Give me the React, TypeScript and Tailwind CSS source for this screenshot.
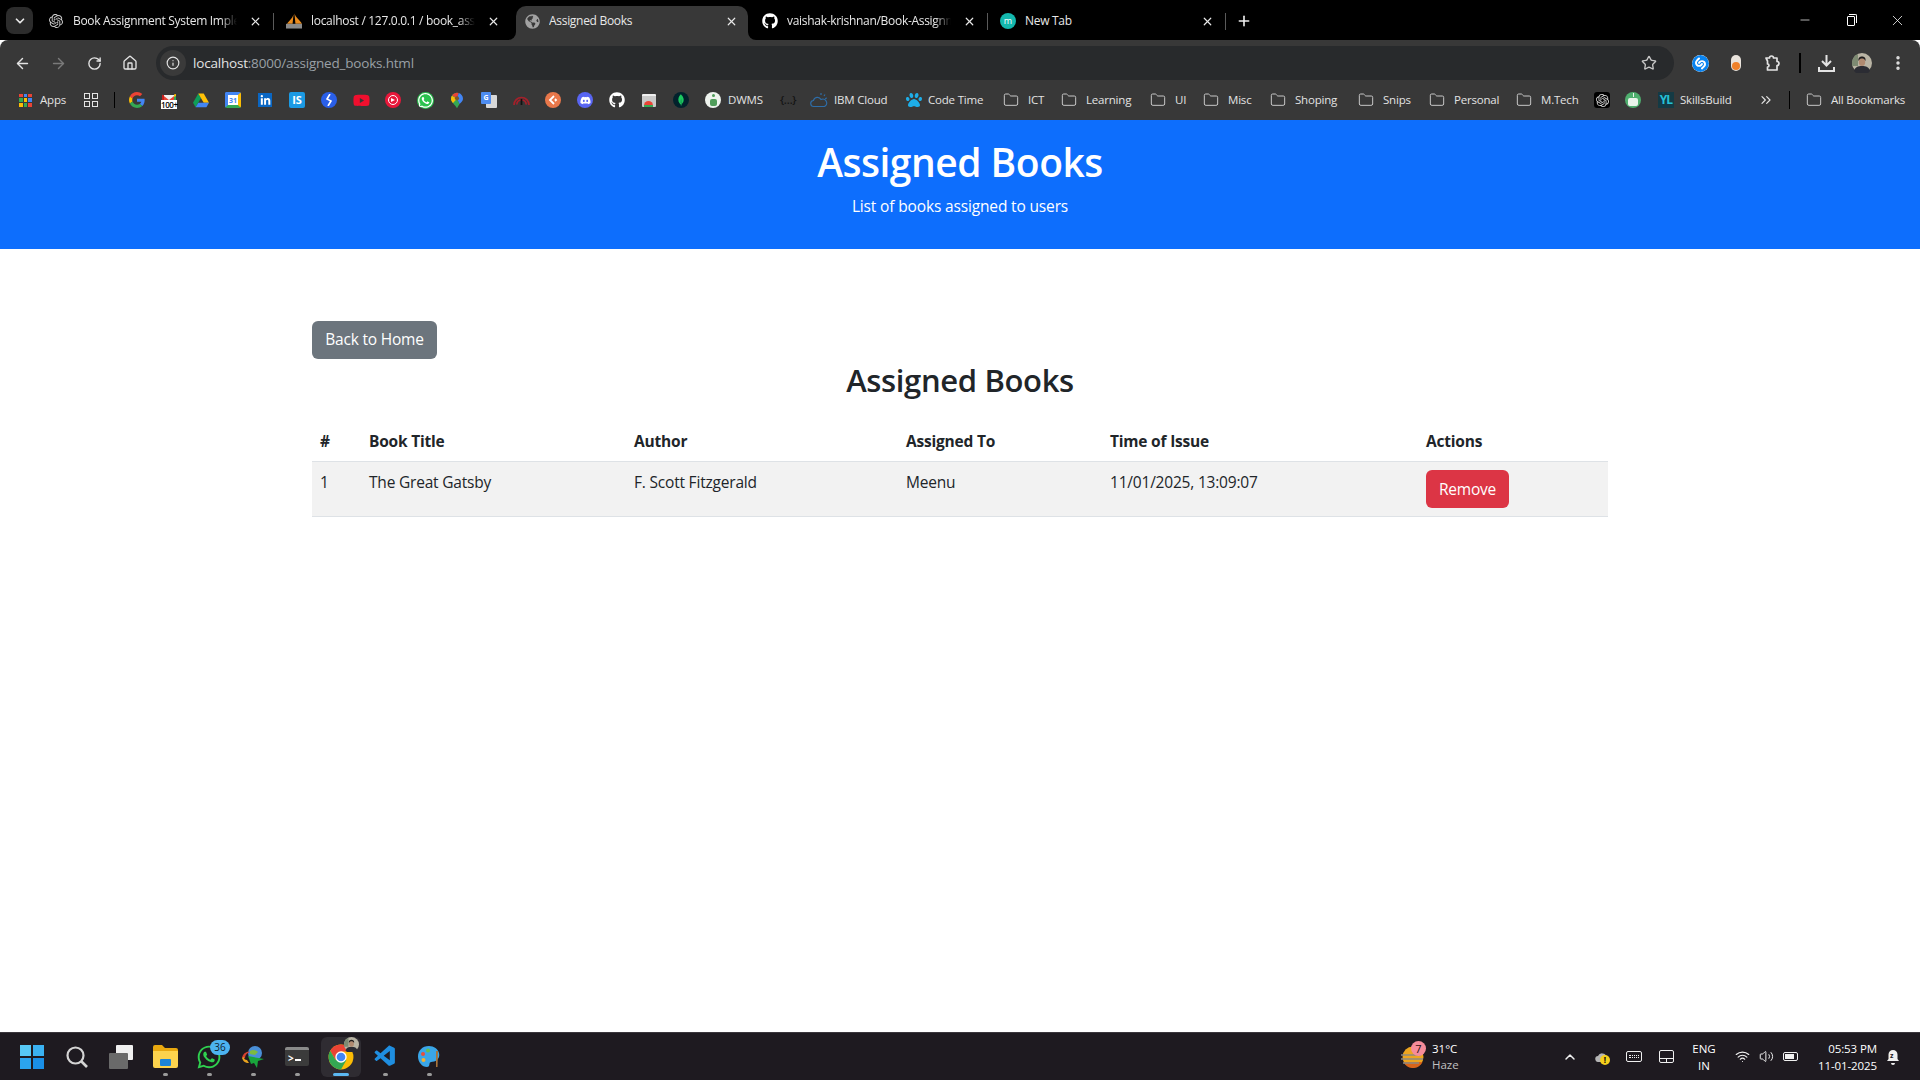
import React from 'react';
import {
  ArrowLeft,
  ArrowRight,
  ChevronDown,
  ChevronUp,
  ChevronsRight,
  EllipsisVertical,
  Folder,
  House,
  Info,
  Minus,
  Plus,
  RotateCw,
  Star,
  Volume2,
  Wifi,
  X,
} from 'lucide-react';
import { FaDiscord, FaGithub, FaGlobeAmericas, FaLinkedinIn, FaPaw, FaWhatsapp, FaYoutube } from 'react-icons/fa';
import { SiMongodb, SiOpenai, SiShazam } from 'react-icons/si';
import { VscVscode } from 'react-icons/vsc';

const GoogleG = ({ size = 16 }: { size?: number }) => (
  <svg width={size} height={size} viewBox="0 0 48 48">
    <path fill="#EA4335" d="M24 9.500c3.500 0 6.700 1.300 9.100 3.500l6.800-6.800C35.800 2.400 30.200 0 24 0 14.600 0 6.500 5.400 2.600 13.200l7.900 6.100C12.400 13.600 17.700 9.500 24 9.500z" />
    <path fill="#4285F4" d="M46.900 24.500c0-1.600-.1-3.100-.4-4.500H24v9h12.900c-.6 3-2.200 5.400-4.700 7.100l7.600 5.900c4.500-4.100 7.100-10.200 7.100-17.500z" />
    <path fill="#FBBC05" d="M10.500 28.700c-.5-1.500-.8-3-.8-4.700s.3-3.200.8-4.700l-7.900-6.100C.9 16.500 0 20.100 0 24s.9 7.500 2.600 10.800l7.900-6.100z" />
    <path fill="#34A853" d="M24 48c6.500 0 11.900-2.100 15.900-5.900l-7.600-5.900c-2.100 1.400-4.900 2.300-8.200 2.300-6.300 0-11.600-4.200-13.500-9.900l-7.900 6.100C6.500 42.600 14.600 48 24 48z" />
  </svg>
);

const Gmail = () => (
  <div className="relative w-4 h-4">
    <svg width="16" height="16" viewBox="0 0 16 16" className="absolute inset-0">
      <path fill="#f1f1f1" d="M1 3h14v10H1z" />
      <path fill="#EA4335" d="M1 2.500 8 8l7-5.500V7L8 11 1 7z" />
      <path fill="#C5221F" d="M1 3h2v5H1z" />
      <path fill="#34A853" d="M13 3h2v5h-2z" />
      <path fill="#FBBC05" d="M13 2.500 15 2v2l-2 1z" />
    </svg>
    <span className="absolute left-0 right-0 -bottom-[1px] bg-white text-black text-[8px] leading-[9px] text-center font-semibold tracking-tighter">
      100+
    </span>
  </div>
);

const Drive = () => (
  <svg width="16" height="15" viewBox="0 0 16 14">
    <path fill="#0F9D58" d="M5.300 0h0L0 9.200l2.600 4.500L8 4.500z" />
    <path fill="#FFC107" d="M5.300 0h5.400L16 9.200h-5.300z" />
    <path fill="#4285F4" d="M2.600 13.700h10.800L16 9.200H5.300z" />
  </svg>
);

const GCal = () => (
  <div className="w-4 h-4 bg-white rounded-[2px] border-t-[3px] border-t-[#4285f4] border-l-[3px] border-l-[#4285f4] border-r-[3px] border-r-[#fbbc05] border-b-[3px] border-b-[#34a853] flex items-center justify-center text-[7px] font-bold text-[#4285f4] leading-none">
    31
  </div>
);

const Maps = () => (
  <svg width="12" height="17" viewBox="0 0 14 18">
    <path fill="#34A853" d="M7 0a7 7 0 0 0-7 7c0 4.500 5 7 7 11 1-2 2-3.500 3-5L7 7z" />
    <path fill="#FBBC05" d="M1 3.500C.3 4.500 0 5.700 0 7c0 2 1 3.500 2.300 5L7 7z" />
    <path fill="#EA4335" d="M7 0C4.800 0 2.600 1 1.200 3L7 7l2-6.700C8.400.1 7.700 0 7 0z" />
    <path fill="#4285F4" d="M14 7c0-3-2-5.800-5-6.700L7 7l3 6c2-2 4-3.500 4-6z" />
    <circle cx="7" cy="6.500" r="2.400" fill="#7b5a2a" />
  </svg>
);

const Translate = () => (
  <div className="relative w-[16px] h-[16px]">
    <div className="absolute left-[5px] top-[3px] w-[11px] h-[13px] bg-[#d8d8d8] rounded-[1px]" />
    <div className="absolute left-0 top-0 w-[10px] h-[12px] bg-[#4d8cf0] rounded-[1px] text-white text-[7px] leading-[12px] text-center font-bold">
      G
    </div>
  </div>
);

const Speedo = () => (
  <svg width="17" height="12" viewBox="0 0 17 12" fill="none" stroke="#a5202a" strokeWidth="1.700">
    <path d="M1 11a7.500 7.500 0 0 1 15 0" />
    <path d="M3.800 10.500a4.700 4.700 0 0 1 9.400 0" />
    <path stroke="#111" d="M8.500 11V5" />
  </svg>
);

const ChromeBox = () => (
  <div className="relative w-[14px] h-[13px] bg-[#c9c9c9] rounded-[1px] border-t-2 border-t-[#efefef]">
    <div className="absolute left-[2px] bottom-0 w-[9px] h-[6px] rounded-t-full bg-[#ea4335] border-b-2 border-b-[#34a853]" />
  </div>
);

const Chrome = ({ size = 36 }: { size?: number }) => (
  <svg width={size} height={size} viewBox="0 0 48 48">
    <circle cx="24" cy="24" r="23" fill="#FBBC05" />
    <path fill="#EA4335" d="M24 1a23 23 0 0 0-19.900 11.500L14 29.500 24 14h19.900A23 23 0 0 0 24 1z" />
    <path fill="#34A853" d="M4.100 12.500A23 23 0 0 0 24 47l10-17.500-20 0z" />
    <circle cx="24" cy="24" r="10.500" fill="#fff" />
    <circle cx="24" cy="24" r="8" fill="#4285F4" />
  </svg>
);

const Windows = () => (
  <div className="grid grid-cols-2 gap-[2px] w-6 h-6">
    <div className="bg-[#57c8f5]" />
    <div className="bg-[#3ab2f2]" />
    <div className="bg-[#2ba4ee]" />
    <div className="bg-[#1a8fe6]" />
  </div>
);

const Explorer = () => (
  <svg width="25" height="23" viewBox="0 0 25 23">
    <path fill="#e8a80f" d="M0 2a2 2 0 0 1 2-2h7l3 3h11a2 2 0 0 1 2 2v4H0z" />
    <path fill="#fcd34d" d="M0 6h25v15a2 2 0 0 1-2 2H2a2 2 0 0 1-2-2z" />
    <rect x="7" y="14" width="11" height="7" rx="1" fill="#1c84d6" />
  </svg>
);

const Idm = () => (
  <svg width="24" height="24" viewBox="0 0 24 24">
    <circle cx="14" cy="8" r="7" fill="#4a8fd8" />
    <path fill="#7dbb3f" d="M9 6c3-2 6-1 8 1l-3 3-5-1z" />
    <path fill="#d6402e" d="M1 13c1-5 5-7 8-6-3 1-5 3-5 6z" />
    <path fill="#e9a21e" d="M1 13c1 3 3 5 7 5l-2-3c-2 0-3-1-3-3z" />
    <path fill="#19a53c" d="M7 11l16 3-6 2-1 7-3-5-3 1z" />
  </svg>
);

const Palette = () => (
  <svg width="24" height="24" viewBox="0 0 24 24">
    <path fill="#3aa6e8" d="M12 1C5 1 1 6 1 11.500S5 22 10 22c3 0 2-3 3-4.500 1-1 4-.5 5.500-1.500C21 14.500 23 12 22 8c-1-4-5-7-10-7z" />
    <circle cx="6" cy="9" r="2" fill="#e6503c" />
    <circle cx="11" cy="5.500" r="2" fill="#67c04c" />
    <circle cx="6.500" cy="15" r="2" fill="#f2b233" />
    <path fill="#a9743b" d="M19 6h2l-.5 16h-1.500z" />
  </svg>
);

const Avatar = ({ size }: { size: number }) => (
  <svg width={size} height={size} viewBox="0 0 20 20">
    <circle cx="10" cy="10" r="10" fill="#b9b4a4" />
    <path fill="#7d8a72" d="M0 9a10 10 0 0 1 6-8v12H0z" />
    <path fill="#2b2c33" d="M2 18c1-4 4-5 8-5s7 1 8 5a10 10 0 0 1-16 0z" />
    <ellipse cx="10" cy="9" rx="3.200" ry="4" fill="#b08a70" />
    <path fill="#1e1c1c" d="M6.500 8C6 4.500 8 3.500 10 3.500s4 1 3.500 4.500c-1-2-2-2.500-3.500-2.500S7.500 6 6.500 8z" />
  </svg>
);

const AppsGrid = () => {
  const colors = ['#ea4335', '#4285f4', '#ea4335', '#34a853', '#fbbc05', '#4285f4', '#fbbc05', '#34a853', '#ea4335'];
  return (
    <div className="grid grid-cols-3 gap-px w-[13px] h-[13px]">
      {colors.map((c, i) => (
        <span key={i} className="block" style={{ backgroundColor: c }} />
      ))}
    </div>
  );
};

const Slot = ({ children, dot }: { children: React.ReactNode; dot?: boolean }) => (
  <div className="relative w-11 h-10 flex items-center justify-center shrink-0">
    {children}
    {dot && <span className="absolute bottom-[1px] w-[5px] h-[3px] rounded-full bg-[#9a9a9a]" />}
  </div>
);

const Mark = ({ children }: { children: React.ReactNode }) => (
  <div className="w-8 h-5 flex items-center justify-center shrink-0">{children}</div>
);

const tabs = [
  { title: 'Book Assignment System Implementation', icon: <SiOpenai size={14} color="#d0d0d0" />, sep: true },
  {
    title: 'localhost / 127.0.0.1 / book_assignment',
    icon: (
      <svg width="17" height="16" viewBox="0 0 17 16">
        <path fill="#e98b1e" d="M9 0c1 4 6 7 8 11H10zM8 1 7 11H1c2-3 6-6 7-10z" />
        <path fill="#8a8a8a" d="M0 11h17v5H0z" />
      </svg>
    ),
  },
  { title: 'Assigned Books', icon: <FaGlobeAmericas size={15} color="#a2a2a2" />, active: true },
  { title: 'vaishak-krishnan/Book-Assignment', icon: <FaGithub size={16} color="#fff" />, sep: true },
  {
    title: 'New Tab',
    icon: (
      <span className="w-4 h-4 rounded-full bg-[#14b8ae] text-white text-[9px] leading-[15px] text-center">m</span>
    ),
    sep: true,
  },
];

const Tab = ({ title, icon, active, sep }: { title: string; icon: React.ReactNode; active?: boolean; sep?: boolean }) => (
  <div className="relative flex items-center w-[238px] h-[34px] shrink-0">
    {active && (
      <>
        <div className="absolute left-0 top-0 bottom-0 w-[232px] bg-[#383838] rounded-t-[10px]" />
        <div className="absolute -left-[8px] bottom-0 w-2 h-2 bg-[#383838]">
          <div className="w-2 h-2 bg-black rounded-br-[8px]" />
        </div>
        <div className="absolute left-[232px] bottom-0 w-2 h-2 bg-[#383838]">
          <div className="w-2 h-2 bg-black rounded-bl-[8px]" />
        </div>
      </>
    )}
    <div className="relative z-10 flex items-center pl-2 pb-1 h-full">
      <div className="w-4 h-4 flex items-center justify-center shrink-0">{icon}</div>
      <div className={`ml-[9px] w-[164px] whitespace-nowrap overflow-hidden text-[12px] tracking-[-0.3px] text-[#e8e8e8] ${title.length > 26 ? '[mask-image:linear-gradient(to_right,black_90%,transparent)]' : ''}`}>
        {title}
      </div>
      <X size={13} strokeWidth={2.2} color="#e8e8e8" className="ml-[12px] shrink-0" />
      {sep && <span className="ml-[11px] w-px h-[17px] bg-[#5a5a5a]" />}
    </div>
  </div>
);

const TabStrip = () => (
  <div className="flex h-10 bg-black shrink-0">
    <div className="ml-[6px] mt-[7px] w-[27px] h-[27px] rounded-lg bg-[#2c2c2c] flex items-center justify-center">
      <ChevronDown size={14} strokeWidth={3} color="#e8e8e8" />
    </div>
    <div className="ml-[7px] mt-[6px] flex">
      {tabs.map((t) => (
        <Tab key={t.title} title={t.title} icon={t.icon} active={t.active} sep={t.sep} />
      ))}
    </div>
    <div className="mt-[6px] pb-1 h-[34px] flex items-center ml-[6px]">
      <Plus size={16} strokeWidth={2.4} color="#f0f0f0" />
    </div>
    <div className="ml-auto flex h-10 items-center">
      <div className="w-[46px] flex justify-center">
        <Minus size={14} strokeWidth={1.2} color="#fff" />
      </div>
      <div className="w-[46px] flex justify-center">
        <div className="relative w-[8px] h-[10px] mt-[2px] border border-white rounded-[1px]">
          <div className="absolute -top-[3px] left-[1px] w-[8px] h-[9px] border-t border-r border-white rounded-tr-[2px]" />
        </div>
      </div>
      <div className="w-[46px] flex justify-center">
        <X size={17} strokeWidth={1.1} color="#fff" />
      </div>
    </div>
  </div>
);

const ToolBtn = ({ children }: { children: React.ReactNode }) => (
  <div className="w-9 h-[34px] flex items-center justify-center shrink-0">{children}</div>
);

const Toolbar = () => (
  <div className="flex items-center h-10 pt-[6px] pl-1 bg-[#383838] rounded-t-lg shrink-0">
    <ToolBtn>
      <ArrowLeft size={17} strokeWidth={2} color="#e3e3e3" />
    </ToolBtn>
    <ToolBtn>
      <ArrowRight size={17} strokeWidth={2} color="#7a7a7a" />
    </ToolBtn>
    <ToolBtn>
      <RotateCw size={15} strokeWidth={2.2} color="#e3e3e3" />
    </ToolBtn>
    <ToolBtn>
      <House size={16} strokeWidth={2} color="#e3e3e3" />
    </ToolBtn>
    <div className="ml-2 flex-1 h-[34px] rounded-full bg-[#282a2c] flex items-center pl-1 pr-[17px]">
      <div className="w-[26px] h-[26px] rounded-full bg-[#3a3a3a] flex items-center justify-center">
        <Info size={14} strokeWidth={2} color="#e3e3e3" />
      </div>
      <div className="ml-[7px] text-[13.500px] tracking-[-0.2px] text-[#e3e3e3]">
        localhost<span className="text-[#9aa0a6]">:8000/assigned_books.html</span>
      </div>
      <Star size={16} strokeWidth={2} color="#c7c7c7" className="ml-auto" />
    </div>
    <div className="w-[246px] pl-2 flex items-center">
      <ToolBtn>
        <SiShazam size={17} color="#0a84f0" className="bg-white rounded-full" />
      </ToolBtn>
      <ToolBtn>
        <div className="relative w-[10px] h-4 rounded-full bg-[#e9e3dc]">
          <div className="absolute bottom-[1px] left-[1px] w-2 h-2 rounded-full bg-[#f0812a]" />
        </div>
      </ToolBtn>
      <ToolBtn>
        <svg width="17" height="17" viewBox="0 0 17 17" fill="none" stroke="#e3e3e3" strokeWidth="1.700" strokeLinejoin="round">
          <path d="M2 3h3.500a2 2 0 0 1 4 0H13v3.500a2 2 0 0 1 0 4V15H3.500v-3a1.500 1.500 0 0 0 0-3V6z" />
        </svg>
      </ToolBtn>
      <span className="ml-[9px] w-[2px] h-5 bg-black" />
      <div className="ml-[7px] flex">
        <ToolBtn>
          <svg width="17" height="17" viewBox="0 0 17 17" fill="none" stroke="#e3e3e3" strokeWidth="2">
            <path d="M8.500 0v10M4 6l4.500 4.500L13 6M1 12v4h15v-4" />
          </svg>
        </ToolBtn>
        <ToolBtn>
          <Avatar size={20} />
        </ToolBtn>
        <ToolBtn>
          <EllipsisVertical size={18} strokeWidth={2.6} color="#e3e3e3" />
        </ToolBtn>
      </div>
    </div>
  </div>
);

const BookmarkIcons = () => (
  <>
    <Mark>
      <GoogleG />
    </Mark>
    <Mark>
      <Gmail />
    </Mark>
    <Mark>
      <Drive />
    </Mark>
    <Mark>
      <GCal />
    </Mark>
    <Mark>
      <div className="w-[14px] h-[14px] bg-[#0a66c2] flex items-center justify-center">
        <FaLinkedinIn size={11} color="#fff" />
      </div>
    </Mark>
    <Mark>
      <div className="w-4 h-4 rounded-[2px] bg-[#1b9ae4] text-white text-[11px] leading-4 font-bold text-center">IS</div>
    </Mark>
    <Mark>
      <div className="w-4 h-4 rounded-full bg-[#2a5fe8] flex items-center justify-center">
        <svg width="8" height="12" viewBox="0 0 8 12" fill="none" stroke="#fff" strokeWidth="1.600">
          <path d="M5 0 2 5l4 2-3 5" />
        </svg>
      </div>
    </Mark>
    <Mark>
      <FaYoutube size={17} color="#f00f2e" />
    </Mark>
    <Mark>
      <div className="w-4 h-4 rounded-full bg-[#e8173a] flex items-center justify-center">
        <div className="w-[10px] h-[10px] rounded-full border border-white flex items-center justify-center">
          <div className="w-0 h-0 border-y-[2.500px] border-y-transparent border-l-[4px] border-l-white" />
        </div>
      </div>
    </Mark>
    <Mark>
      <FaWhatsapp size={17} color="#fff" className="bg-[#2bc24f] rounded-full" />
    </Mark>
    <Mark>
      <Maps />
    </Mark>
    <Mark>
      <Translate />
    </Mark>
    <Mark>
      <Speedo />
    </Mark>
    <Mark>
      <div className="w-4 h-4 rounded-full bg-[#e8774a] flex items-center justify-center">
        <svg width="10" height="10" viewBox="0 0 10 10" fill="none" stroke="#fff" strokeWidth="1.800">
          <path d="M6 1 2 5l4 4M7 4l1 1-1 1" />
        </svg>
      </div>
    </Mark>
    <Mark>
      <div className="w-4 h-4 rounded-full bg-[#5865f2] flex items-center justify-center">
        <FaDiscord size={11} color="#fff" />
      </div>
    </Mark>
    <Mark>
      <FaGithub size={16} color="#fff" />
    </Mark>
    <Mark>
      <ChromeBox />
    </Mark>
    <Mark>
      <div className="w-4 h-4 rounded-full bg-[#02222c] flex items-center justify-center">
        <SiMongodb size={12} color="#1cc860" />
      </div>
    </Mark>
    <Mark>
      <div className="relative w-4 h-4 rounded-full bg-[#eef3ee] flex items-center justify-center">
        <div className="w-[3px] h-[3px] absolute top-[2px] rounded-full bg-[#4f9d5a]" />
        <div className="w-[7px] h-[7px] mt-[5px] rounded-[2px] bg-[#4f9d5a]" />
      </div>
    </Mark>
  </>
);

const folders = [
  { label: 'ICT', outer: 'ml-[18px]', text: 'w-[15px]' },
  { label: 'Learning', outer: 'ml-[18px]', text: 'w-[45px]' },
  { label: 'UI', outer: 'ml-[19px]', text: 'w-[10px]' },
  { label: 'Misc', outer: 'ml-[18px]', text: 'w-[24px]' },
  { label: 'Shoping', outer: 'ml-[18px]', text: 'w-[44px]' },
  { label: 'Snips', outer: 'ml-[19px]', text: 'w-[28px]' },
  { label: 'Personal', outer: 'ml-[18px]', text: 'w-[44px]' },
  { label: 'M.Tech', outer: 'ml-[18px]', text: 'w-[36px]' },
];

const BmText = ({ className, children }: { className: string; children: React.ReactNode }) => (
  <span className={`${className} shrink-0 whitespace-nowrap text-[11.500px] tracking-[-0.2px] text-[#e3e3e3]`}>
    {children}
  </span>
);

const Bookmarks = () => (
  <div className="flex items-center h-10 pl-[19px] bg-[#383838] shrink-0">
    <AppsGrid />
    <BmText className="ml-2 w-[27px]">Apps</BmText>
    <div className="ml-2 w-8 flex justify-center">
      <div className="grid grid-cols-2 gap-[2px] w-[14px] h-[14px]">
        <span className="border-[1.500px] border-[#e3e3e3]" />
        <span className="border-[1.500px] border-[#e3e3e3]" />
        <span className="border-[1.500px] border-[#e3e3e3]" />
        <span className="border-[1.500px] border-[#e3e3e3]" />
      </div>
    </div>
    <span className="ml-[7px] w-px h-[16px] bg-black" />
    <div className="ml-[6px] flex">
      <BookmarkIcons />
    </div>
    <BmText className="-ml-px w-[34px]">DWMS</BmText>
    <div className="ml-[10px] w-8 flex justify-center text-[11px] text-[#141414] font-semibold tracking-tighter">{'{…}'}</div>
    <div className="w-[30px] flex justify-center">
      <svg width="18" height="16" viewBox="0 0 18 16" fill="none" stroke="#2e6da8" strokeWidth="1.200">
        <path d="M4 14.500a3 3 0 0 1-.5-6 4 4 0 0 1 7.500-1 3.500 3.500 0 0 1 3.500 7z" />
        <path d="M11 1v2M15 2.500l-1 1.500M17 6l-2 .5" />
      </svg>
    </div>
    <BmText className="w-[55px]">IBM Cloud</BmText>
    <FaPaw size={16} color="#1eaee8" className="ml-[17px] shrink-0" />
    <BmText className="ml-[6px] w-[57px]">Code Time</BmText>
    {folders.map((f) => (
      <div key={f.label} className={`${f.outer} flex items-center gap-[9px] shrink-0`}>
        <Folder size={16} strokeWidth={1.5} color="#c7c7c7" />
        <BmText className={f.text}>{f.label}</BmText>
      </div>
    ))}
    <div className="ml-[17px] w-4 h-4 rounded-[3px] bg-black flex items-center justify-center shrink-0">
      <SiOpenai size={13} color="#d8d8d8" />
    </div>
    <div className="relative ml-[15px] w-4 h-4 rounded-full bg-[#4fae6e] flex items-center justify-center shrink-0">
      <div className="absolute top-[1px] w-px h-[4px] bg-[#e9f3ea]" />
      <div className="w-[10px] h-2 mt-[3px] rounded-[2px] bg-[#e9f3ea]" />
    </div>
    <div className="ml-[17px] w-4 h-4 bg-[#143a44] flex items-center justify-center text-[12px] leading-none font-bold text-[#26c1d8] tracking-[-1px] shrink-0">
      YL
    </div>
    <BmText className="ml-[6px] w-[52px]">SkillsBuild</BmText>
    <ChevronsRight size={16} strokeWidth={1.8} color="#e3e3e3" className="ml-[26px] shrink-0" />
    <span className="ml-[15px] w-px h-[18px] bg-black" />
    <div className="ml-4 flex items-center gap-[9px] shrink-0">
      <Folder size={16} strokeWidth={1.5} color="#c7c7c7" />
      <BmText className="w-[74px]">All Bookmarks</BmText>
    </div>
  </div>
);

const Taskbar = () => (
  <div className="h-12 shrink-0 flex items-center pl-[10px] bg-[#1e1a20] border-t border-t-[#3a363c] text-white">
    <Slot>
      <Windows />
    </Slot>
    <div className="ml-px flex">
      <Slot>
        <svg width="24" height="24" viewBox="0 0 24 24" fill="none" stroke="#d4d4d4" strokeWidth="2.200">
          <circle cx="10.500" cy="10.500" r="8" />
          <path d="M16.500 16.500 22 22" strokeWidth="2.600" />
        </svg>
      </Slot>
      <Slot>
        <div className="relative w-6 h-6">
          <div className="absolute right-0 top-0 w-[17px] h-[15px] bg-[#f0f0f0] rounded-[1px]" />
          <div className="absolute left-0 bottom-0 w-[19px] h-[16px] bg-[#6a6a6a] rounded-[1px]" />
        </div>
      </Slot>
      <Slot dot>
        <Explorer />
      </Slot>
      <div className="relative">
        <Slot dot>
          <FaWhatsapp size={26} color="#2fd04f" />
        </Slot>
        <span className="absolute left-[23px] top-[3px] min-w-[20px] h-[15px] px-[3px] rounded-full bg-[#4cb3f0] text-[#10222e] text-[10px] leading-[15px] text-center">
          36
        </span>
      </div>
      <Slot dot>
        <Idm />
      </Slot>
      <Slot dot>
        <div className="w-6 h-[19px] rounded-[2px] bg-[#3b3b3b] border-t-[3px] border-t-[#8a8a8a] flex items-center pl-[3px] gap-[1px] text-[10px] font-bold leading-none text-white">
          <span>&gt;</span>
          <span className="mt-1 w-[6px] h-[2px] bg-white" />
        </div>
      </Slot>
      <div className="relative w-11 h-10 flex items-center justify-center shrink-0">
        <div className="absolute inset-x-[2px] inset-y-0 rounded-md bg-[#2f2c32]" />
        <div className="relative">
          <Chrome size={26} />
          <div className="absolute -top-[7px] -right-[5px]">
            <Avatar size={15} />
          </div>
        </div>
        <span className="absolute bottom-[1px] w-4 h-[3px] rounded-full bg-[#5cb8f2]" />
      </div>
      <Slot dot>
        <VscVscode size={25} color="#1f8ee0" />
      </Slot>
      <Slot dot>
        <Palette />
      </Slot>
    </div>
    <div className="ml-auto flex items-center pr-[19px]">
      <div className="relative w-[26px] h-8 flex items-center justify-center">
        <svg width="24" height="22" viewBox="0 0 24 22">
          <circle cx="12" cy="11" r="10.500" fill="#eda51f" />
          <path fill="#d9641a" d="M2.500 16h19a10.500 10.500 0 0 1-19 0z" />
          <path stroke="#8d8a80" strokeWidth="1.500" d="M0 9h20M0 13h22M2 17h16" />
        </svg>
        <span className="absolute left-[11px] top-0 w-[15px] h-[15px] rounded-full bg-[#f58c9a] text-[#2a0f12] text-[11px] leading-[15px] text-center">
          7
        </span>
      </div>
      <div className="ml-[6px] w-10 text-[11.500px] leading-[16px]">
        <div>31°C</div>
        <div className="text-[#c0c0c0]">Haze</div>
      </div>
      <div className="ml-[82px] w-8 flex justify-center">
        <ChevronUp size={16} strokeWidth={2.2} color="#f0f0f0" />
      </div>
      <div className="relative w-8 flex justify-center">
        <svg width="14" height="10" viewBox="0 0 14 10" fill="#b5b5b5">
          <path d="M3.500 10a3 3 0 0 1-.5-6 4.500 4.500 0 0 1 8.500 1A2.500 2.500 0 0 1 11 10z" />
        </svg>
        <span className="absolute left-[14px] top-[3px] w-[10px] h-[10px] rounded-full bg-[#f4cf1c] text-black text-[8px] leading-[10px] text-center font-bold">
          !
        </span>
      </div>
      <div className="w-8 flex justify-center">
        <div className="w-[16px] h-[11px] rounded-[2px] border border-[#f0f0f0] flex flex-col items-center justify-center gap-[1px]">
          <span className="w-[10px] border-t border-dotted border-[#f0f0f0]" />
          <span className="w-[10px] border-t border-dotted border-[#f0f0f0]" />
        </div>
      </div>
      <div className="w-8 flex justify-center">
        <div className="w-[15px] h-[13px] rounded-[2px] border border-[#f0f0f0] flex items-end">
          <div className="w-full h-[4px] border-t border-[#f0f0f0] flex justify-center">
            <span className="w-px h-full bg-[#f0f0f0]" />
          </div>
        </div>
      </div>
      <div className="ml-1 w-9 text-center text-[11.500px] leading-[17px]">
        <div>ENG</div>
        <div>IN</div>
      </div>
      <div className="ml-2 w-6 flex justify-center">
        <Wifi size={15} strokeWidth={1.8} color="#f0f0f0" />
      </div>
      <div className="w-6 flex justify-center">
        <Volume2 size={15} strokeWidth={1.6} color="#f0f0f0" />
      </div>
      <div className="w-6 flex justify-center">
        <div className="relative w-[15px] h-[9px] rounded-[2px] border border-[#f0f0f0]">
          <div className="absolute inset-[1px] right-[3px] bg-[#f0f0f0]" />
        </div>
      </div>
      <div className="ml-[5px] w-[70px] text-right text-[11.500px] leading-[17px] tracking-[-0.1px]">
        <div>05:53 PM</div>
        <div>11-01-2025</div>
      </div>
      <div className="relative ml-2 w-4 flex justify-center">
        <svg width="14" height="16" viewBox="0 0 14 16" fill="#f0f0f0">
          <path d="M7 1a4.500 4.500 0 0 0-4.500 4.500V10L1 12h12l-1.500-2V5.500A4.500 4.500 0 0 0 7 1zM5 14h4a2 2 0 0 1-4 0z" />
        </svg>
        <span className="absolute left-[5px] top-[3px] text-[7px] leading-[7px] font-bold text-[#1e1a20]">z</span>
      </div>
    </div>
  </div>
);

const columns = ['w-[49px]', 'w-[265px]', 'w-[272px]', 'w-[204px]', 'w-[316px]', 'w-[190px]'];
const heads = ['#', 'Book Title', 'Author', 'Assigned To', 'Time of Issue', 'Actions'];

const App = () => {
  return (
    <div className="h-[1080px] w-[1920px] flex flex-col overflow-hidden bg-white font-['Open_Sans',sans-serif]">
      <TabStrip />
      <Toolbar />
      <Bookmarks />
      <header className="bg-[#0d6efd] text-white text-center h-[129px] pt-[18px] shrink-0">
        <h1 className="text-[39px] leading-[48px] font-semibold mb-2 tracking-[-0.5px]">Assigned Books</h1>
        <p className="text-[15.500px] leading-6 tracking-[-0.15px]">List of books assigned to users</p>
      </header>
      <main className="flex-1 w-[1296px] mx-auto pt-[72px] text-[#212529]">
        <button className="block h-[38px] w-[125px] rounded-md bg-[#6c757d] text-white text-[15.500px] tracking-[-0.2px]">
          Back to Home
        </button>
        <h2 className="text-center text-[31px] leading-[38px] pt-[2px] font-semibold mb-[22px] tracking-[-0.35px]">
          Assigned Books
        </h2>
        <table className="w-full table-fixed border-collapse text-[15.500px] tracking-[-0.2px]">
          <colgroup>
            {columns.map((c) => (
              <col key={c} className={c} />
            ))}
          </colgroup>
          <thead>
            <tr className="border-b border-[#dee2e6]">
              {heads.map((h) => (
                <th key={h} className="p-2 text-left font-bold leading-6">
                  {h}
                </th>
              ))}
            </tr>
          </thead>
          <tbody>
            <tr className="bg-[#f2f2f2] border-b border-[#dee2e6] align-top">
              <td className="p-2 leading-6">1</td>
              <td className="p-2 leading-6">The Great Gatsby</td>
              <td className="p-2 leading-6">F. Scott Fitzgerald</td>
              <td className="p-2 leading-6">Meenu</td>
              <td className="p-2 leading-6">11/01/2025, 13:09:07</td>
              <td className="p-2 leading-6">
                <button className="block h-[38px] w-[83px] rounded-md bg-[#dc3545] text-white">Remove</button>
              </td>
            </tr>
          </tbody>
        </table>
      </main>
      <Taskbar />
    </div>
  );
};

export default App;
